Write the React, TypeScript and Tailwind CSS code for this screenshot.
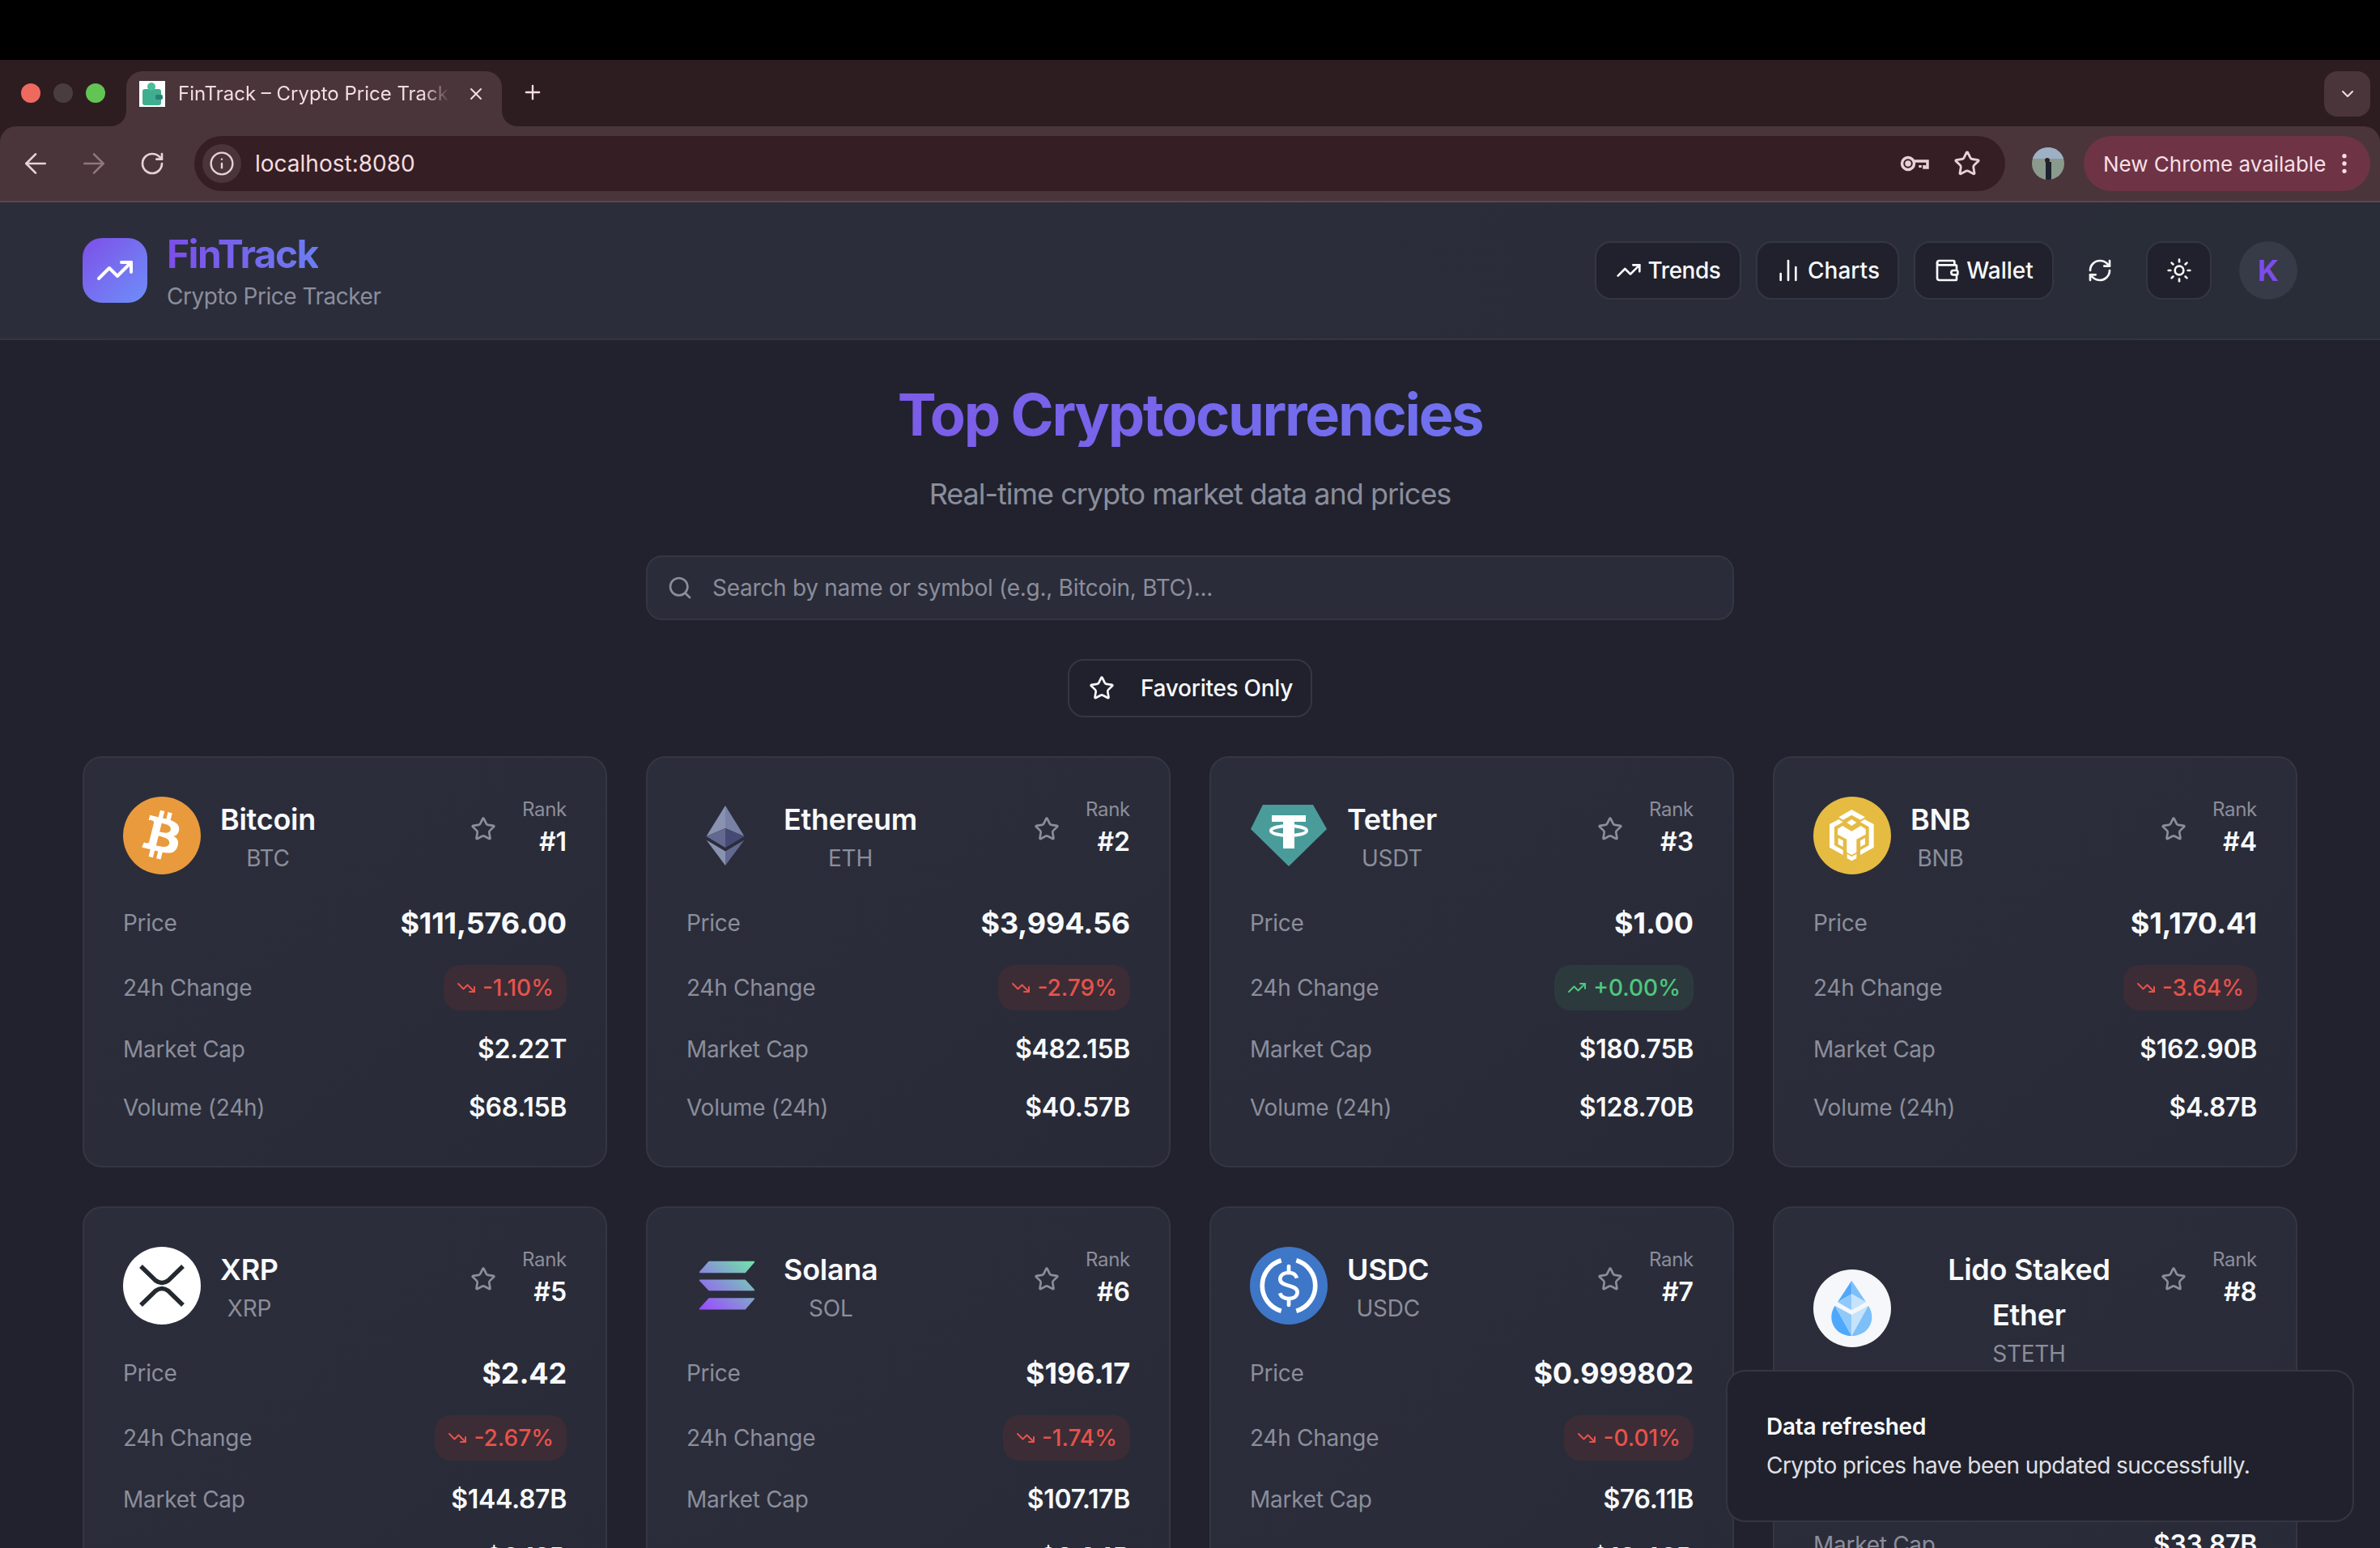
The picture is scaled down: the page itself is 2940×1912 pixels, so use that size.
import React from "react";
import {
  ArrowLeft,
  ArrowRight,
  ChartNoAxesColumn,
  ChevronDown,
  EllipsisVertical,
  Info,
  Plus,
  RefreshCw,
  RotateCw,
  Search,
  Star,
  Sun,
  TrendingDown,
  TrendingUp,
  Wallet,
  X,
} from "lucide-react";

const BitcoinLogo = () => (
  <svg viewBox="0 0 24 24" className="w-24 h-24 shrink-0">
    <circle cx="12" cy="12" r="12" fill="#e99a3c" />
    <path
      fill="#fff"
      fillRule="evenodd"
      d="M17.288 10.291c.24-1.59-.974-2.45-2.64-3.03l.54-2.153-1.315-.33-.525 2.107c-.345-.087-.705-.167-1.064-.25l.526-2.127-1.32-.33-.54 2.165c-.285-.067-.565-.132-.84-.2l-1.815-.45-.35 1.407s.975.225.955.236c.535.136.63.486.615.766l-1.477 5.92c-.075.166-.24.406-.614.314.015.02-.96-.24-.96-.24l-.66 1.51 1.71.426.93.242-.54 2.19 1.32.327.54-2.17c.36.1.705.19 1.05.273l-.51 2.154 1.32.33.545-2.19c2.24.427 3.93.257 4.64-1.774.57-1.637-.03-2.58-1.217-3.196.854-.193 1.5-.76 1.68-1.93h.01zm-3.01 4.22c-.404 1.64-3.157.75-4.05.53l.72-2.9c.896.23 3.757.67 3.33 2.37zm.41-4.24c-.37 1.49-2.662.735-3.405.55l.654-2.64c.744.18 3.137.524 2.75 2.084v.006z"
    />
  </svg>
);

const EthereumLogo = () => (
  <svg viewBox="0 0 96 96" className="w-24 h-24 shrink-0">
    <polygon points="48,11 24.5,49 48,39" fill="#8a92b2" />
    <polygon points="48,11 71.5,49 48,39" fill="#7a81a6" />
    <polygon points="24.5,49 48,39 48,63" fill="#62688f" />
    <polygon points="71.5,49 48,39 48,63" fill="#454a75" />
    <polygon points="24.5,53.5 48,67.5 48,85" fill="#8a92b2" />
    <polygon points="71.5,53.5 48,67.5 48,85" fill="#62688f" />
  </svg>
);

const TetherLogo = () => (
  <svg viewBox="0 0 96 96" className="w-24 h-24 shrink-0">
    <polygon points="16,10 78,10 95,40 48,86 1,40" fill="#4a9c9a" />
    <path d="M27 23h42v8H55v7h-14v-7H27z" fill="#fff" />
    <rect x="41" y="34" width="14" height="30" fill="#fff" />
    <ellipse cx="48" cy="42" rx="22" ry="6" fill="none" stroke="#fff" strokeWidth="4" />
  </svg>
);

const BnbLogo = () => (
  <svg viewBox="30 42 288 288" className="w-24 h-24 shrink-0">
    <circle cx="174" cy="186" r="144" fill="#e6bb41" />
    <g fill="#fff">
      <polygon points="172,90 222,118 205,128 172,110 140,128 124,118" />
      <polygon points="172,126 190,138 172,150 154,138" />
      <polygon points="124,126 140,136 108,154 108,222 140,240 140,258 90,230 90,144" />
      <polygon points="220,126 204,136 236,154 236,222 204,240 204,258 254,230 254,144" />
      <polygon points="120,162 138,150 172,170 206,150 224,162 224,182 190,200 190,248 172,258 154,248 154,200 120,182" />
      <polygon points="122,195 140,205 140,228 122,218" />
      <polygon points="222,195 204,205 204,228 222,218" />
      <polygon points="155,254 172,264 190,254 190,270 172,280 155,270" />
    </g>
  </svg>
);

const XrpLogo = () => (
  <svg viewBox="0 0 96 96" className="w-24 h-24 shrink-0">
    <circle cx="48" cy="48" r="48" fill="#fff" />
    <g fill="none" stroke="#23292f" strokeWidth="5.500">
      <path d="M22 24L40 41.500Q48 47.500 56 41.500L74 24" />
      <path d="M22 72L40 54.500Q48 48.500 56 54.500L74 72" />
    </g>
  </svg>
);

const SolanaLogo = () => (
  <svg viewBox="18 30 288 288" className="w-24 h-24 shrink-0">
    <defs>
      <linearGradient id="sol" gradientUnits="userSpaceOnUse" x1="90" y1="270" x2="260" y2="70">
        <stop offset="0" stopColor="#9a4dff" />
        <stop offset="1" stopColor="#6fe8a5" />
      </linearGradient>
    </defs>
    <g fill="url(#sol)" stroke="url(#sol)" strokeWidth="5" strokeLinejoin="round">
      <polygon points="102,86 268,86 235,124 68,124" />
      <polygon points="68,154 235,154 268,190 102,190" />
      <polygon points="102,222 268,222 235,260 68,260" />
    </g>
  </svg>
);

const UsdcLogo = () => (
  <svg viewBox="42 30 288 288" className="w-24 h-24 shrink-0">
    <circle cx="186" cy="174" r="144" fill="#3e77c8" />
    <g fill="none" stroke="#fff">
      <path d="M158 80A98 98 0 0 0 158 268" strokeWidth="17" />
      <path d="M214 80A98 98 0 0 1 214 268" strokeWidth="17" />
      <path
        d="M216 146C212 132 200 126 186 126C166 126 154 136 154 150C154 166 172 170 186 174C200 178 218 182 218 198C218 212 206 222 186 222C170 222 158 216 153 202"
        strokeWidth="14"
      />
      <path d="M186 102V126M186 222V246" strokeWidth="14" strokeLinecap="round" />
    </g>
  </svg>
);

const LidoLogo = () => (
  <svg viewBox="30 24 288 288" className="w-24 h-24 shrink-0">
    <circle cx="174" cy="168" r="144" fill="#f5f7fa" />
    <polygon points="172,65 120,145 172,115" fill="#4fa8fb" />
    <polygon points="172,65 172,115 225,145" fill="#7cbff9" />
    <polygon points="120,145 172,115 172,175" fill="#8fc9fb" />
    <polygon points="172,115 225,145 172,175" fill="#c5e3fb" />
    <path d="M110 158L172 270C130 270 97 240 97 200C97 185 102 170 110 158Z" fill="#4fa8fb" />
    <polygon points="110,158 172,192 172,270" fill="#8fc9fb" />
    <polygon points="234,158 172,192 172,270" fill="#c5e3fb" />
    <path d="M234 158L172 270C214 270 247 240 247 200C247 185 242 170 234 158Z" fill="#7cbff9" />
  </svg>
);

const COINS = [
  { name: "Bitcoin", symbol: "BTC", rank: 1, price: "$111,576.00", change: "-1.10%", cap: "$2.22T", volume: "$68.15B", logo: <BitcoinLogo /> },
  { name: "Ethereum", symbol: "ETH", rank: 2, price: "$3,994.56", change: "-2.79%", cap: "$482.15B", volume: "$40.57B", logo: <EthereumLogo /> },
  { name: "Tether", symbol: "USDT", rank: 3, price: "$1.00", change: "+0.00%", cap: "$180.75B", volume: "$128.70B", logo: <TetherLogo /> },
  { name: "BNB", symbol: "BNB", rank: 4, price: "$1,170.41", change: "-3.64%", cap: "$162.90B", volume: "$4.87B", logo: <BnbLogo /> },
  { name: "XRP", symbol: "XRP", rank: 5, price: "$2.42", change: "-2.67%", cap: "$144.87B", volume: "$6.12B", logo: <XrpLogo /> },
  { name: "Solana", symbol: "SOL", rank: 6, price: "$196.17", change: "-1.74%", cap: "$107.17B", volume: "$8.94B", logo: <SolanaLogo /> },
  { name: "USDC", symbol: "USDC", rank: 7, price: "$0.999802", change: "-0.01%", cap: "$76.11B", volume: "$13.40B", logo: <UsdcLogo /> },
  { name: "Lido Staked Ether", symbol: "STETH", rank: 8, price: "$3,990.12", change: "-2.81%", cap: "$33.87B", volume: "$52.10M", logo: <LidoLogo /> },
];

type Coin = (typeof COINS)[number];

const HeaderButton = ({ icon, label, className }: { icon: React.ReactNode; label: string; className: string }) => (
  <button
    className={`h-[72px] flex items-center justify-center gap-2 rounded-[20px] border-2 border-[#343642] bg-[#20212c] text-[28px] font-medium text-[#f8fafc] ${className}`}
  >
    {icon}
    {label}
  </button>
);

const CoinCard = ({ coin }: { coin: Coin }) => {
  const isUp = coin.change.startsWith("+");
  return (
    <div className="rounded-3xl border-2 border-[#343642] bg-gradient-to-br from-[#2c2d3b] to-[#282b37] p-12">
      <div className="flex items-start justify-between mb-8">
        <div className="flex items-center gap-6">
          {coin.logo}
          <div className="text-center">
            <div className="text-[36px] leading-14 font-semibold text-[#f8fafc]">{coin.name}</div>
            <div className="text-[28px] leading-10 text-[#8b8e9b]">{coin.symbol}</div>
          </div>
        </div>
        <div className="flex items-center gap-4 shrink-0">
          <button className="p-4 text-[#8b8e9b]">
            <Star size={32} />
          </button>
          <div className="text-right">
            <div className="text-[24px] leading-8 text-[#8b8e9b]">Rank</div>
            <div className="text-[32px] leading-12 font-semibold tracking-normal text-[#f8fafc]">#{coin.rank}</div>
          </div>
        </div>
      </div>

      <div className="flex flex-col gap-6">
        <div className="flex items-center justify-between">
          <span className="text-[28px] leading-10 text-[#8b8e9b]">Price</span>
          <span className="text-[36px] leading-14 font-bold tracking-[-0.004em] text-[#f8fafc]">{coin.price}</span>
        </div>
        <div className="flex items-center justify-between">
          <span className="text-[28px] leading-10 text-[#8b8e9b]">24h Change</span>
          <span
            className={`h-14 px-4 flex items-center gap-2 rounded-[20px] text-[28px] font-medium tracking-normal ${
              isUp ? "bg-[#2c3a3e] text-[#4ec77d]" : "bg-[#3c2c35] text-[#e5534b]"
            }`}
          >
            {isUp ? <TrendingUp size={24} /> : <TrendingDown size={24} />}
            {coin.change}
          </span>
        </div>
        <div className="flex items-center justify-between">
          <span className="text-[28px] leading-10 text-[#8b8e9b]">Market Cap</span>
          <span className="text-[32px] leading-12 font-semibold tracking-[-0.01em] text-[#f8fafc]">{coin.cap}</span>
        </div>
        <div className="flex items-center justify-between">
          <span className="text-[28px] leading-10 text-[#8b8e9b]">Volume (24h)</span>
          <span className="text-[32px] leading-12 font-semibold tracking-[-0.01em] text-[#f8fafc]">{coin.volume}</span>
        </div>
      </div>
    </div>
  );
};

const App = () => {
  return (
    <div className="relative h-screen overflow-hidden bg-[#21222e] font-['Inter',sans-serif]">
      <div className="h-[74px] bg-black" />

      {/* Browser tab strip */}
      <div className="h-[82px] bg-[#2e1d20] flex items-end pl-[26px] pr-3 text-[#f3dde1]">
        <div className="self-center flex gap-4 mr-[26px]">
          <div className="w-6 h-6 rounded-full bg-[#ee6a5f]" />
          <div className="w-6 h-6 rounded-full bg-[#4a3d42]" />
          <div className="w-6 h-6 rounded-full bg-[#61c554]" />
        </div>
        <div className="relative w-[464px] h-[68px] rounded-t-[20px] bg-[#4a353a] flex items-center pl-4 pr-5 pb-3">
          <svg viewBox="0 0 32 32" className="w-8 h-8 shrink-0 bg-white">
            <rect x="4" y="10" width="23" height="20" rx="3" fill="#3fae8f" />
            <circle cx="15" cy="7" r="5" fill="#4bbd9c" />
            <rect x="20" y="17" width="9" height="6" rx="2" fill="#2b7f72" />
          </svg>
          <span className="ml-4 w-[336px] overflow-hidden whitespace-nowrap text-[24px] [mask-image:linear-gradient(to_right,black_90%,transparent)]">
            FinTrack – Crypto Price Tracker
          </span>
          <X size={24} className="ml-auto" />
          <svg viewBox="0 0 20 20" className="absolute bottom-0 -left-5 w-5 h-5">
            <path d="M20 0V20H0C12 20 20 12 20 0Z" fill="#4a353a" />
          </svg>
          <svg viewBox="0 0 20 20" className="absolute bottom-0 -right-5 w-5 h-5">
            <path d="M0 0V20H20C8 20 0 12 0 0Z" fill="#4a353a" />
          </svg>
        </div>
        <Plus size={28} className="ml-6 self-center -mt-[2px]" />
        <div className="ml-auto self-start mt-[14px] w-[57px] h-14 rounded-2xl bg-[#4a353a] flex items-center justify-center">
          <ChevronDown size={24} />
        </div>
      </div>

      {/* Browser toolbar */}
      <div className="h-[94px] bg-[#2e1d20]">
        <div className="h-full rounded-t-[20px] bg-[#4a353a] border-b-2 border-[#5c484b] flex items-center pl-6 pr-3 text-[#e7d3d6]">
          <ArrowLeft size={40} strokeWidth={1.6} />
          <ArrowRight size={40} strokeWidth={1.6} className="ml-8 text-[#8f787c]" />
          <RotateCw size={32} className="ml-9" />
          <div className="ml-9 flex-1 h-[68px] rounded-full bg-[#351f24] flex items-center pl-[10px] pr-[30px]">
            <div className="w-12 h-12 rounded-full bg-[#4a353a] flex items-center justify-center">
              <Info size={32} strokeWidth={1.8} />
            </div>
            <span className="ml-[17px] text-[28px] text-[#f3dde1]">localhost:8080</span>
            <svg viewBox="0 0 36 24" fill="none" stroke="currentColor" strokeWidth="3.500" className="ml-auto w-9 h-6">
              <circle cx="10" cy="12" r="7.500" />
              <circle cx="10" cy="12" r="2" fill="currentColor" />
              <path d="M17.500 9H34V17H30V14M25 14V17" />
            </svg>
            <Star size={34} strokeWidth={2} className="ml-[30px]" />
          </div>
          <svg viewBox="0 0 40 40" className="ml-[33px] w-10 h-10 rounded-full shrink-0">
            <rect width="40" height="40" fill="#8a9a8c" />
            <rect width="40" height="14" fill="#9db0c4" />
            <rect x="17" y="18" width="7" height="22" fill="#1c2230" />
            <circle cx="19" cy="16" r="3" fill="#2a2020" />
          </svg>
          <div className="ml-6 w-[354px] h-[68px] rounded-full bg-[#6e3446] flex items-center pl-6 text-[#f9dfe4]">
            <span className="text-[26px] whitespace-nowrap">New Chrome available</span>
            <EllipsisVertical size={32} className="ml-auto mr-4" />
          </div>
        </div>
      </div>

      {/* App header */}
      <header className="h-[170px] px-[102px] py-8 border-b-2 border-[#343642] bg-gradient-to-r from-[#2c2d3b] to-[#292d38] flex items-center justify-between">
        <div className="flex items-center gap-6">
          <div className="w-20 h-20 rounded-3xl bg-gradient-to-br from-[#7c4ee8] to-[#6b8ef8] flex items-center justify-center">
            <TrendingUp size={48} color="#fff" />
          </div>
          <div>
            <div className="text-[48px] leading-16 font-bold tracking-[-0.034em] bg-gradient-to-r from-[#7c4de8] to-[#6a7df0] bg-clip-text text-transparent w-fit">
              FinTrack
            </div>
            <div className="text-[28px] leading-10 tracking-[-0.017em] text-[#8b8e9b]">Crypto Price Tracker</div>
          </div>
        </div>
        <div className="flex items-center">
          <div className="flex items-center gap-[18px]">
            <HeaderButton icon={<TrendingUp size={32} />} label="Trends" className="w-[181px] tracking-[-0.017em]" />
            <HeaderButton icon={<ChartNoAxesColumn size={32} />} label="Charts" className="w-[177px]" />
            <HeaderButton icon={<Wallet size={32} />} label="Wallet" className="w-[173px]" />
            <button className="w-[78px] h-[72px] flex items-center justify-center text-[#f8fafc]">
              <RefreshCw size={32} />
            </button>
            <button className="w-[81px] h-[72px] flex items-center justify-center rounded-[20px] border-2 border-[#343642] bg-[#20212c] text-[#f8fafc]">
              <Sun size={32} />
            </button>
          </div>
          <div className="ml-[34px] w-[72px] h-[72px] rounded-full bg-[#373a47] flex items-center justify-center text-[36px] font-bold text-[#7c4de8]">
            K
          </div>
        </div>
      </header>

      <main className="px-[102px] pt-[52px] tracking-[-0.017em]">
        <div className="text-center">
          <h1 className="text-[72px] leading-20 font-bold tracking-[-0.032em] bg-gradient-to-r from-[#7c5ce8] to-[#6f72ef] bg-clip-text text-transparent w-fit mx-auto">
            Top Cryptocurrencies
          </h1>
          <p className="mt-[30px] text-[36px] leading-14 tracking-[-0.028em] text-[#8b8e9b]">
            Real-time crypto market data and prices
          </p>
        </div>

        <div className="mt-12 mx-auto w-[1344px] h-20 rounded-[20px] border-2 border-[#343642] bg-[#2a2c39] flex items-center pl-6 gap-6">
          <Search size={32} className="text-[#8b8e9b]" />
          <span className="text-[28px] text-[#8b8e9b]">Search by name or symbol (e.g., Bitcoin, BTC)...</span>
        </div>

        <div className="mt-12 flex justify-center">
          <button className="w-[302px] h-[72px] pl-6 flex items-center gap-8 rounded-[20px] border-2 border-[#343642] bg-[#20212c] text-[28px] font-medium text-[#f8fafc]">
            <Star size={32} />
            Favorites Only
          </button>
        </div>

        <div className="mt-12 grid grid-cols-4 gap-12">
          {COINS.map(coin => (
            <CoinCard key={coin.symbol} coin={coin} />
          ))}
        </div>
      </main>

      {/* Toast */}
      <div className="absolute right-8 bottom-8 w-[776px] rounded-3xl border-2 border-[#343642] bg-[#20212c] p-12">
        <div className="text-[28px] leading-10 font-semibold tracking-[-0.01em] text-[#f8fafc]">Data refreshed</div>
        <div className="mt-2 text-[28px] leading-10 tracking-[-0.02em] text-[#e0e0e5]">
          Crypto prices have been updated successfully.
        </div>
      </div>
    </div>
  );
};

export default App;
